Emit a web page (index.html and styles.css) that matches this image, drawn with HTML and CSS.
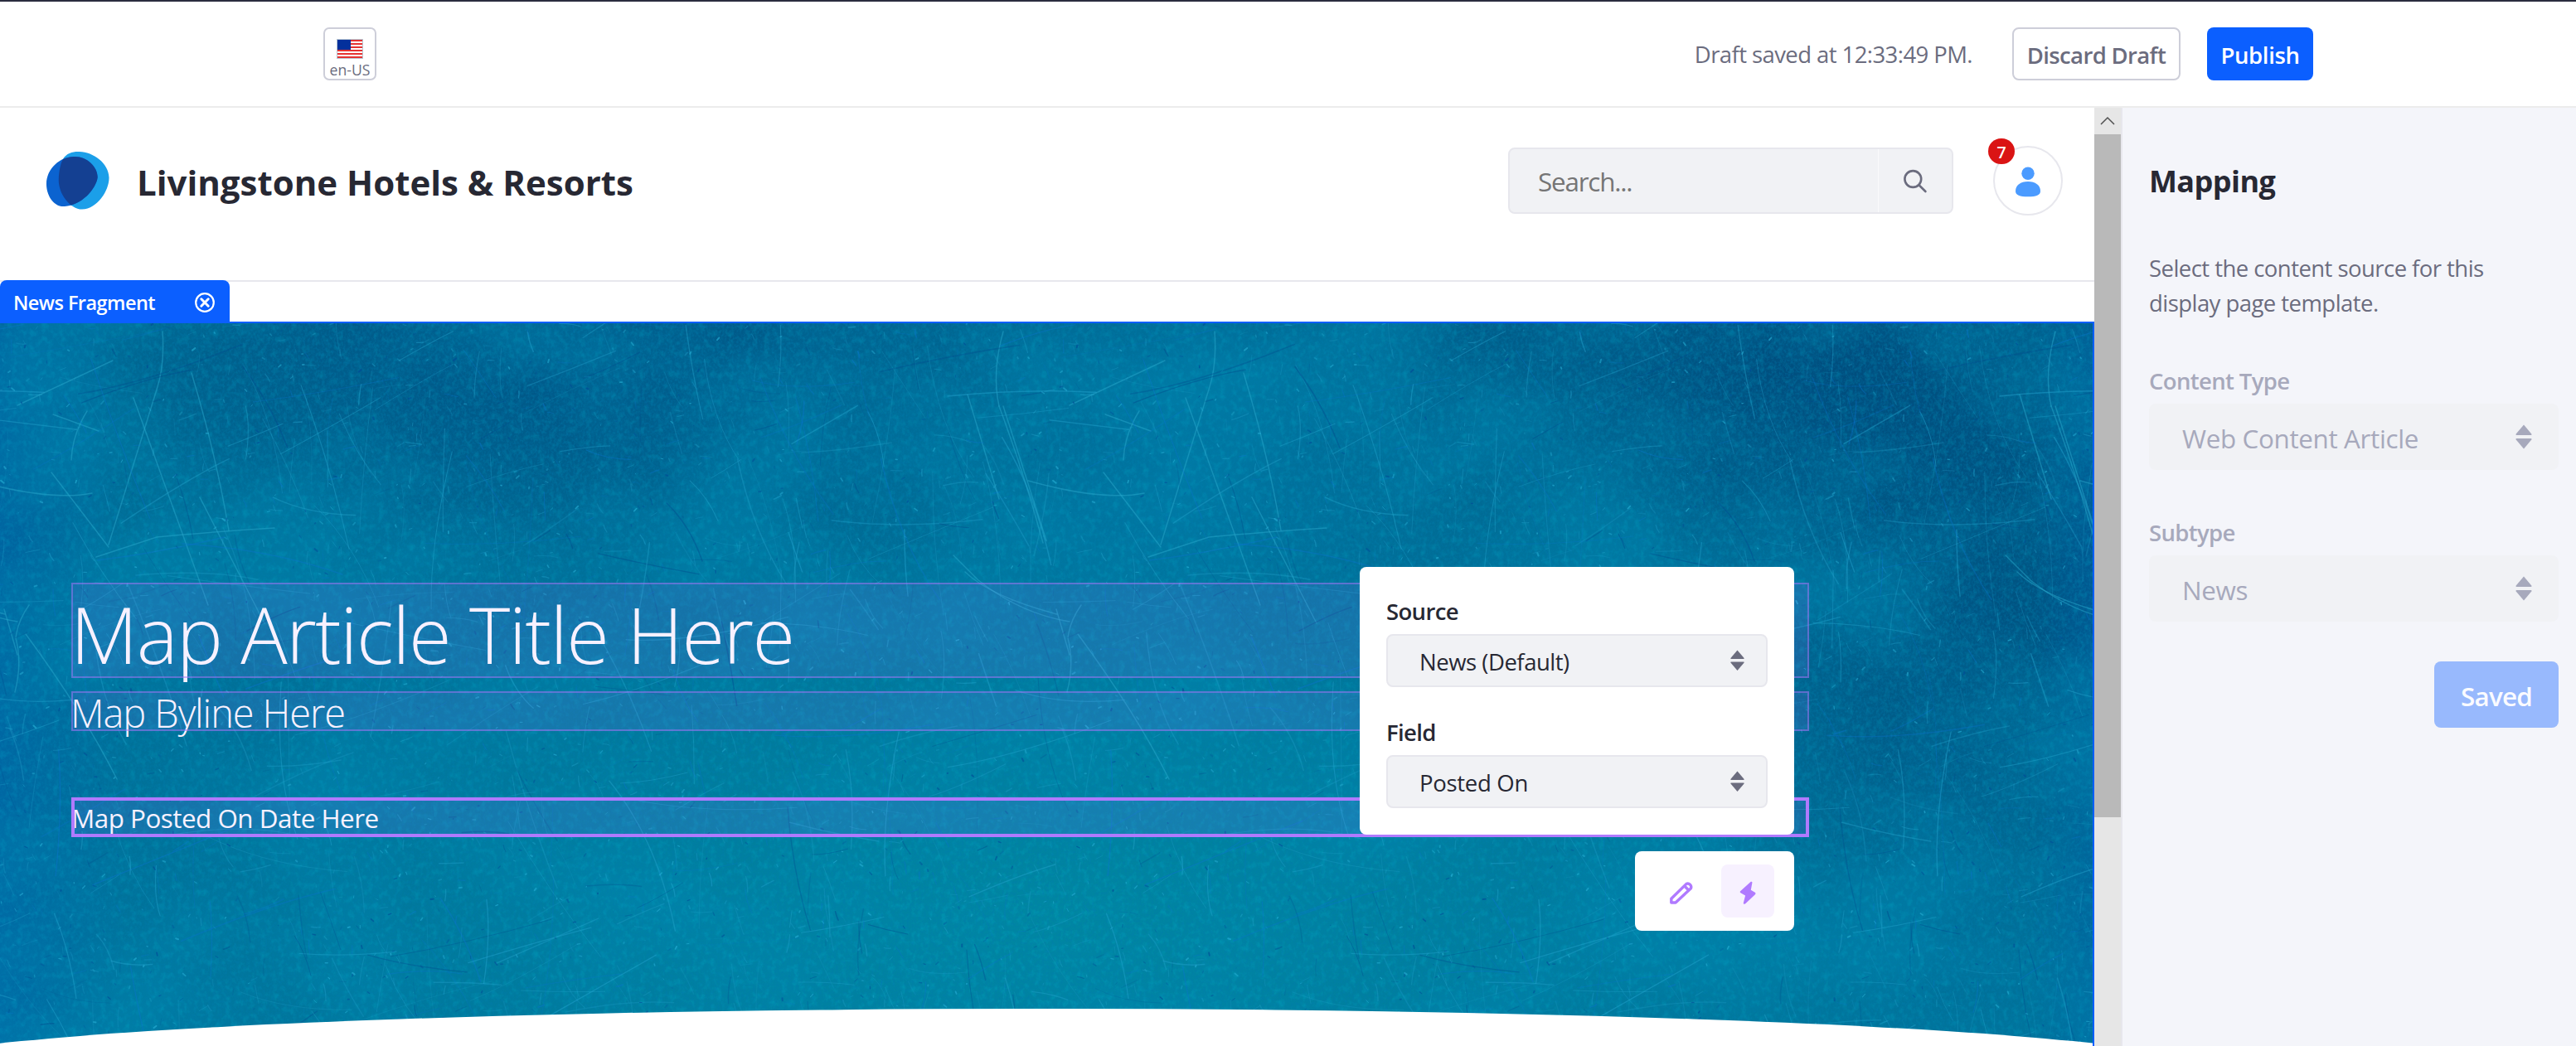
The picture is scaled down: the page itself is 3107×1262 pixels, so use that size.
FILE: index.html
```html
<!DOCTYPE html>
<html lang="en-US">
<head>
<meta charset="utf-8">
<title>Display Page Template</title>
<link rel="stylesheet" href="styles.css">
</head>
<body>
<svg class="defs" aria-hidden="true">
  <symbol id="caret-double" viewBox="0 0 20 30">
    <path d="M10 .5 19.300 11.500c.5.9.2 1.500-.7 1.500H1.400C.5 13 .2 12.400.7 11.500Z"/>
    <path d="M10 29.500 19.300 18.500c.5-.9.2-1.500-.7-1.500H1.400c-.9 0-1.200.6-.7 1.500Z"/>
  </symbol>
</svg>

<header class="toolbar">
  <button class="locale" type="button">
    <svg width="32" height="24" viewBox="0 0 32 24">
      <rect width="32" height="24" fill="#b9c6d2"/>
      <rect x="1" y="1" width="30" height="22" fill="#fff"/>
      <path d="M1 2h30M1 6h30M1 10h30M1 14h30M1 18h30M1 22h30" stroke="#e53232" stroke-width="2"/>
      <rect x="1" y="1" width="16" height="12" fill="#03309c"/>
    </svg>
    <span>en-US</span>
  </button>
  <div class="toolbar-actions">
    <span class="draft-status">Draft saved at 12:33:49 PM.</span>
    <button class="btn btn-discard" type="button">Discard Draft</button>
    <button class="btn btn-publish" type="button">Publish</button>
  </div>
</header>

<div class="workspace">
  <main class="page">
    <div class="site-header">
      <svg class="logo" width="76" height="70" viewBox="0 0 76 70">
        <clipPath id="petal"><path d="M38 0C55-.5 75 13 75.500 31 76 46 62 69 43 69.600 28 69 14 50 14.800 33 15 24 17 14 20 9 24 2 31 0 38 0Z"/></clipPath>
        <path fill="#1b9fe9" d="M38 0C55-.5 75 13 75.500 31 76 46 62 69 43 69.600 28 69 14 50 14.800 33 15 24 17 14 20 9 24 2 31 0 38 0Z"/>
        <path fill="#0b63d0" d="M33 6C48 5 62 18 61.700 31 60 45 42 65 22 66 8 67 0 52 0 39 0 20 17 6 33 6Z"/>
        <path fill="#144092" clip-path="url(#petal)" d="M33 6C48 5 62 18 61.700 31 60 45 42 65 22 66 8 67 0 52 0 39 0 20 17 6 33 6Z"/>
      </svg>
      <h1 class="site-name">Livingstone Hotels &amp; Resorts</h1>
      <div class="search">
        <span class="search-text">Search...</span>
        <span class="search-button">
          <svg width="30" height="30" viewBox="0 0 30 30" fill="none" stroke="#6b6c7e" stroke-width="2.600" stroke-linecap="round"><circle cx="12.300" cy="12" r="9.900"/><path d="M19.500 19.300 27.400 27"/></svg>
        </span>
      </div>
      <div class="user">
        <svg width="32" height="38" viewBox="0 0 32 38" fill="#4b9bff"><circle cx="16" cy="8.300" r="7.700"/><path d="M16 18c9 0 15 4.500 15 11.500 0 5-5 6.800-15 6.800S1 34.500 1 29.500C1 22.500 7 18 16 18Z"/></svg>
        <span class="badge">7</span>
      </div>
    </div>

    <div class="fragment-bar">
      <div class="fragment-tab">
        <span>News Fragment</span>
        <svg width="24" height="24" viewBox="0 0 24 24" fill="none" stroke="#fff"><circle cx="12" cy="12" r="10.800" stroke-width="2.200"/><path d="M7.800 7.800 16.200 16.200M16.200 7.800 7.800 16.200" stroke-width="3" stroke-linecap="round"/></svg>
      </div>
    </div>

    <section class="hero">
      <svg class="texture" width="2524" height="872" viewBox="0 0 2524 872" aria-hidden="true">
        <defs>
          <filter id="grain" x="0" y="0" width="100%" height="100%">
            <feTurbulence type="fractalNoise" baseFrequency=".35 .3" numOctaves="3" seed="4"/>
            <feColorMatrix values="0 0 0 0 0  0 0 0 0 .2  0 0 0 0 .42  2.200 0 0 0 -.9"/>
          </filter>
          <filter id="stain" x="0" y="0" width="100%" height="100%">
            <feTurbulence type="fractalNoise" baseFrequency=".004 .005" numOctaves="6" seed="11"/>
            <feColorMatrix values="0 0 0 0 0  0 0 0 0 .24  0 0 0 0 .43  2.600 0 0 0 -.95"/>
          </filter>
          <filter id="sheen" x="0" y="0" width="100%" height="100%">
            <feTurbulence type="fractalNoise" baseFrequency=".14 .12" numOctaves="4" seed="23"/>
            <feColorMatrix values="0 0 0 0 0  0 0 0 0 .58  0 0 0 0 .74  0 2.400 0 0 -1.100"/>
          </filter>
        </defs>
        <rect width="2524" height="872" filter="url(#stain)" opacity=".5"/>
        <rect width="2524" height="872" filter="url(#sheen)" opacity=".2"/>
        <rect width="2524" height="872" filter="url(#grain)" opacity=".45"/>
        <g id="scratches" fill="none" stroke-linecap="round"></g>
      </svg>
      <svg class="curve" width="2524" height="45" viewBox="0 0 2524 45" aria-hidden="true"><ellipse cx="1263" cy="74" rx="1403" ry="74" fill="#fff"/></svg>

      <div class="editables">
        <div class="editable editable-title">Map Article Title Here</div>
        <div class="editable editable-byline">Map Byline Here</div>
        <div class="editable editable-date">Map Posted On Date Here</div>
      </div>

      <div class="popover">
        <div class="label">Source</div>
        <div class="select"><span>News (Default)</span><svg><use href="#caret-double"/></svg></div>
        <div class="label">Field</div>
        <div class="select select-field"><span>Posted On</span><svg><use href="#caret-double"/></svg></div>
      </div>

      <div class="edit-tools">
        <span class="tool"><svg width="32" height="32" viewBox="0 0 32 32" fill="none" stroke="#b07aff" stroke-width="3.400" stroke-linejoin="round"><path d="M3.800 28v-4.800L22 5.400a4.200 4.200 0 0 1 5.500 5.300L9 28Z"/><path d="M19.500 7.800 25 13.200"/></svg></span>
        <span class="tool tool-active"><svg width="32" height="32" viewBox="0 0 32 32" fill="#b07aff"><path d="M19.200 3.200c.8-.7 2.300-.5 2.200.7L19.800 12.800l5 3c.9.600.9 1.700.1 2.400L13.200 29.200c-.9.800-2.600.5-2.400-.8l2.300-9-5.600-3.100c-1-.6-1-1.600-.2-2.300Z"/></svg></span>
      </div>
    </section>
  </main>

  <div class="scrollbar">
    <div class="scroll-up"><svg width="18" height="12" viewBox="0 0 18 12" fill="none" stroke="#505050" stroke-width="1.500"><path d="M1 10 9 2l8 8"/></svg></div>
    <div class="scroll-thumb"></div>
  </div>

  <aside class="sidebar">
    <h2 class="sidebar-title">Mapping</h2>
    <p class="sidebar-text">Select the content source for this display page template.</p>
    <div class="label">Content Type</div>
    <div class="select"><span>Web Content Article</span><svg><use href="#caret-double"/></svg></div>
    <div class="label label-subtype">Subtype</div>
    <div class="select"><span>News</span><svg><use href="#caret-double"/></svg></div>
    <button class="saved" type="button">Saved</button>
  </aside>
</div>
<script src="texture.js"></script>
</body>
</html>
```

FILE: styles.css
```css
* { box-sizing: border-box; }

body {
  margin: 0;
  width: 3107px;
  height: 1262px;
  overflow: hidden;
  display: flex;
  flex-direction: column;
  background: #fff;
  color: #272833;
  font-family: "Open Sans", "Noto Sans", sans-serif;
  font-size: 27.5px;
}

button { font: inherit; margin: 0; padding: 0; }
h1, h2, p { margin: 0; }
svg { display: block; flex: none; }
.defs { position: absolute; width: 0; height: 0; }

/* Top toolbar */
.toolbar {
  flex: none;
  height: 130px;
  padding: 0 317px 0 390px;
  border-top: 2px solid #2b2c3f;
  border-bottom: 2px solid #ececec;
  display: flex;
  align-items: center;
  justify-content: space-between;
}

.locale {
  width: 64px;
  height: 64px;
  padding-top: 12px;
  border: 2px solid #cdced9;
  border-radius: 7px;
  background: #fff;
  color: #6b6c7e;
  font-size: 17.6px;
  line-height: 20px;
  display: flex;
  flex-direction: column;
  align-items: center;
  justify-content: flex-start;
  gap: 3px;
}

.toolbar-actions { display: flex; align-items: center; }
.draft-status { color: #6b6c7e; letter-spacing: -.58px; margin-right: 48px; }

.btn {
  height: 64px;
  padding-top: 2px;
  border-radius: 8px;
  font-weight: 600;
}
.btn-discard {
  width: 203px;
  margin-right: 32px;
  border: 2px solid #cdced9;
  background: #fff;
  color: #6b6c7e;
  letter-spacing: -.65px;
}
.btn-publish {
  width: 128px;
  border: 0;
  background: #0b5fff;
  color: #fff;
  letter-spacing: -.35px;
}

.workspace { flex: 1; min-height: 0; display: flex; }
.page { width: 2526px; display: flex; flex-direction: column; }

/* Site header */
.site-header {
  height: 210px;
  padding: 46px 38px 78px 56px;
  border-bottom: 2px solid #e7e7ed;
  display: flex;
  align-items: center;
}
.site-name {
  margin-left: 33px;
  padding-top: 3px;
  font-size: 42px;
  font-weight: 700;
  line-height: 56px;
}
.search {
  width: 537px;
  height: 80px;
  margin-left: auto;
  border: 2px solid #e7e7ed;
  border-radius: 8px;
  background: #f1f2f5;
  display: flex;
}
.search-text {
  flex: 1;
  padding-left: 34px;
  border-right: 1px solid #fafafc;
  color: #757575;
  font-size: 31.4px;
  line-height: 77px;
  letter-spacing: -1.2px;
}
.search-button {
  width: 88px;
  padding-top: 2px;
  display: flex;
  align-items: center;
  justify-content: center;
}
.user {
  position: relative;
  width: 84px;
  height: 84px;
  margin-left: 48px;
  padding-top: 4px;
  border: 2px solid #e7e7ed;
  border-radius: 50%;
  display: flex;
  align-items: center;
  justify-content: center;
}
.badge {
  position: absolute;
  left: -8px;
  top: -11px;
  width: 32px;
  height: 31px;
  border-radius: 16px;
  background: #da1414;
  color: #fff;
  font-size: 19.600px;
  font-weight: 600;
  line-height: 33px;
  text-align: center;
}

/* Fragment tab */
.fragment-bar { height: 48px; display: flex; align-items: flex-end; }
.fragment-tab {
  width: 277px;
  height: 50px;
  margin-top: -2px;
  padding: 4px 18px 0 16px;
  border-radius: 8px 8px 0 0;
  background: #0b5fff;
  color: #fff;
  font-size: 23.5px;
  font-weight: 600;
  letter-spacing: -.55px;
  display: flex;
  align-items: center;
  justify-content: space-between;
}

/* Hero */
.hero {
  position: relative;
  flex: 1;
  overflow: hidden;
  border-top: 2px solid #0b5fff;
  border-right: 2px solid #0b5fff;
  background:
    linear-gradient(90deg, rgba(0, 88, 178, .4), rgba(0, 88, 178, 0) 6%, rgba(0, 80, 160, 0) 97%, rgba(0, 88, 170, .3)),
    radial-gradient(ellipse 420px 480px at 95% 42%, rgba(0, 60, 112, .6), rgba(0, 60, 112, 0)),
    radial-gradient(ellipse 600px 240px at 27% 6%, rgba(0, 74, 128, .6), rgba(0, 74, 128, 0)),
    radial-gradient(ellipse 560px 260px at 86% 6%, rgba(0, 64, 116, .6), rgba(0, 64, 116, 0)),
    radial-gradient(ellipse 380px 300px at 56% 22%, rgba(0, 130, 176, .45), rgba(0, 130, 176, 0)),
    radial-gradient(ellipse 1100px 460px at 50% 82%, rgba(0, 142, 164, .75), rgba(0, 142, 164, 0)),
    linear-gradient(#00648f, #007098 45%, #00749c);
}
.texture { position: absolute; left: 0; top: 0; }
.curve { position: absolute; left: 0; bottom: 0; }

.editables { position: relative; width: 2096px; margin: 313px 0 0 86px; color: #f7f1ff; }
.editable {
  background: rgba(150, 120, 255, .14);
  outline: 2px solid rgba(166, 116, 245, .5);
  outline-offset: -2px;
  white-space: nowrap;
}
.editable-title {
  height: 115px;
  padding-top: 5px;
  font-size: 94px;
  font-weight: 300;
  line-height: 115px;
  letter-spacing: -1.5px;
  text-indent: -1px;
}
.editable-byline {
  height: 48px;
  margin-top: 16px;
  padding-top: 2px;
  font-size: 47px;
  font-weight: 300;
  line-height: 48px;
  letter-spacing: -1.1px;
  text-indent: -1px;
}
.editable-date {
  height: 48px;
  margin-top: 80px;
  padding-top: 1px;
  outline: 4px solid #b07aff;
  outline-offset: -4px;
  font-size: 31.4px;
  line-height: 48px;
  letter-spacing: -.5px;
}

/* Form pieces shared by popover and sidebar */
.label { font-weight: 600; line-height: 40px; padding-top: 2px; margin-bottom: 7px; letter-spacing: -.64px; }
.select {
  display: flex;
  align-items: center;
  justify-content: space-between;
  border-radius: 8px;
  background: #f1f2f5;
}
.select span { padding-top: 2px; }
.select svg { fill: #6b6c7e; }

.popover {
  position: absolute;
  left: 1640px;
  top: 294px;
  width: 524px;
  height: 323px;
  padding: 32px;
  border-radius: 8px;
  background: #fff;
}
.popover .select {
  height: 64px;
  margin-bottom: 33px;
  padding: 0 26px 0 38px;
  border: 2px solid #e7e7ed;
  letter-spacing: -.48px;
}
.popover .select-field { letter-spacing: -.3px; }
.popover .select svg { width: 17px; height: 25.5px; }

.edit-tools {
  position: absolute;
  left: 1972px;
  top: 637px;
  width: 192px;
  height: 96px;
  padding: 16px 24px;
  border-radius: 8px;
  background: #fff;
  display: flex;
  gap: 16px;
}
.tool {
  width: 64px;
  height: 64px;
  padding-top: 4px;
  border-radius: 8px;
  display: flex;
  align-items: center;
  justify-content: center;
}
.tool-active { background: #f7f1ff; }

/* Scrollbar */
.scrollbar { width: 32px; background: #e6e6e6; }
.scroll-up { height: 32px; display: flex; align-items: center; justify-content: center; }
.scroll-thumb { height: 824px; background: #b9b9b9; }

/* Sidebar */
.sidebar {
  flex: 1;
  padding: 64px 21px 0 32px;
  border-left: 2px solid #e7e7ed;
  background: #f4f5fa;
  color: #a7a9bc;
}
.sidebar-title { color: #272833; font-size: 36px; font-weight: 700; line-height: 50px; letter-spacing: -.57px; }
.sidebar-text { width: 440px; margin: 59px 0 51px; color: #6b6c7e; line-height: 42px; letter-spacing: -.55px; }
.sidebar .label-subtype { margin-top: 54px; }
.sidebar .select {
  height: 80px;
  padding: 0 32px 0 40px;
  font-size: 31.4px;
  letter-spacing: -.35px;
}
.sidebar .select span { padding-top: 2px; }
.sidebar .select svg { width: 20px; height: 30px; fill: #a7a9bc; }
.saved {
  display: block;
  width: 150px;
  height: 80px;
  margin: 48px 0 0 auto;
  padding-top: 2px;
  border: 0;
  border-radius: 8px;
  background: #98b9fd;
  color: #fafbff;
  font-size: 31.4px;
  font-weight: 600;
  letter-spacing: -.75px;
}
```

FILE: texture.js
```js
// Fills the hero background with scratch marks; the pattern repeats every TILE pixels.
const NS = "http://www.w3.org/2000/svg";
const TILE = 1269;
const layer = document.getElementById("scratches");

let state = 20260;
function random() {
  state = (state * 1664525 + 1013904223) % 4294967296;
  return state / 4294967296;
}

function stroke(d, color, width, opacity) {
  for (const shift of [-TILE, 0, TILE]) {
    const path = document.createElementNS(NS, "path");
    path.setAttribute("d", d);
    path.setAttribute("stroke", color);
    path.setAttribute("stroke-width", width);
    path.setAttribute("opacity", opacity);
    path.setAttribute("transform", `translate(${shift} 0)`);
    layer.append(path);
  }
}

// Long marks, drawn where they stand out.
[
  "M1167 86 1205 212", "M1205 100Q1235 180 1258 265", "M1210 100 1262 262", "M1210 10Q1196 60 1205 100",
  "M1465 10Q1468 50 1458 80L1400 267", "M1510 210 1588 362", "M1164 300Q1195 330 1275 351",
  "M1304 340Q1290 360 1288 380 1296 410 1287 445", "M1290 99 1405 45", "M1333 110 1388 130",
  "M1374 106Q1356 135 1355 165", "M1331 180 1400 270", "M1385 282 1458 258Q1520 252 1600 247",
  "M1240 190Q1330 215 1380 205", "M1274 345 1290 400", "M1430 90 1520 340", "M1500 60Q1530 160 1545 250",
  "M1300 375Q1370 470 1410 550", "M1150 280 1180 310Q1230 350 1290 360"
].forEach((d) => stroke(d, "#27a8cc", 1.500, .5));

// Random hairlines, mostly short.
for (let i = 0; i < 1100; i++) {
  const x = random() * TILE, y = random() * 872;
  const steep = random() < .6;
  const angle = steep ? .95 + random() * .8 : -.6 + random() * .85;
  const length = 8 + Math.pow(random(), 5) * 200;
  const dx = Math.cos(angle) * length, dy = Math.sin(angle) * length;
  const bend = (random() - .5) * length * .2;
  const d = `M${x.toFixed(1)} ${y.toFixed(1)}q${(dx / 2 + bend).toFixed(1)} ${(dy / 2 - bend).toFixed(1)} ${dx.toFixed(1)} ${dy.toFixed(1)}`;
  const color = random() < .65 ? "#23a4ce" : random() < .6 ? "#0a74cf" : "#004a8c";
  stroke(d, color, (.7 + random() * .9).toFixed(2), (.15 + random() * .32).toFixed(2));
}

// Chips and specks.
for (let i = 0; i < 1000; i++) {
  const x = random() * TILE, y = random() * 872;
  const dx = (random() - .5) * 7, dy = (random() - .5) * 7;
  const color = random() < .65 ? "#27b0d6" : "#004a96";
  stroke(`M${x.toFixed(1)} ${y.toFixed(1)}l${dx.toFixed(1)} ${dy.toFixed(1)}`, color, (.8 + random() * 1.300).toFixed(2), (.2 + random() * .45).toFixed(2));
}
```
